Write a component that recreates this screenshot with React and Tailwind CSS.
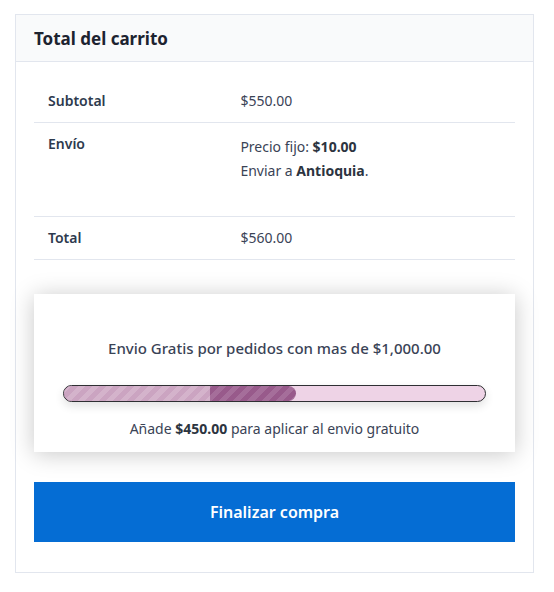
import React from 'react';

const cart = {
  subtotal: 550,
  shipping: 10,
  region: 'Antioquia',
  freeFrom: 1000,
};

const money = (n) =>
  '$' + n.toLocaleString('en-US', { minimumFractionDigits: 2, maximumFractionDigits: 2 });

const FreeShippingBar = ({ subtotal, goal }) => {
  const pct = Math.min(100, (subtotal / goal) * 100);
  const missing = goal - subtotal;

  return (
    <div className="bg-white shadow-[0_2px_22px_rgba(0,0,0,0.22)] px-[29px] pt-[40px] pb-[11px]">
      <p className="text-center text-[15px] font-medium text-[#3a4356] leading-[28px]">
        Envio Gratis por pedidos con mas de {money(goal)}
      </p>
      <div className="mt-[23px] h-[17px] rounded-full border border-[#2f2f33] bg-[#eed3e6] overflow-hidden shadow-[0_4px_10px_rgba(0,0,0,0.12)]">
        <div
          className="h-full rounded-full flex overflow-hidden bg-[repeating-linear-gradient(135deg,#a56e9a_0_5px,#985a8b_5px_10px)]"
          style={{ width: `${pct}%` }}
        >
          <div className="h-full w-[63%] bg-[repeating-linear-gradient(135deg,#d4b3cb_0_5px,#cba4c1_5px_10px)]" />
        </div>
      </div>
      <p className="mt-[15px] text-center text-[14px] text-[#3a4356] leading-[24px]">
        Añade <strong className="font-bold text-[#2c3440]">{money(missing)}</strong> para aplicar al envio gratuito
      </p>
    </div>
  );
};

export default function App() {
  const total = cart.subtotal + cart.shipping;

  return (
    <div className="min-h-screen bg-white pt-[14px] pl-[15px] pr-[20px] font-['Noto_Sans',sans-serif] text-[#2d3748]">
      <div className="border border-[#e2e6ee]">
        <div className="bg-[#f9fafb] border-b border-[#e2e6ee] px-[18px] h-[47px] flex items-center pt-[2px]">
          <h2 className="text-[17px] font-bold text-[#1d2330]">Total del carrito</h2>
        </div>

        <div className="px-[18px] pt-[18px] pb-[30px]">
          <div className="text-[14px] leading-[24px]">
            <div className="grid grid-cols-[2fr_3fr] border-b border-[#e2e6ee] py-[9px]">
              <div className="px-[14px] font-semibold text-[#2d3a4e]">Subtotal</div>
              <div className="px-[14px] text-[#3a4356]">{money(cart.subtotal)}</div>
            </div>
            <div className="grid grid-cols-[2fr_3fr] border-b border-[#e2e6ee] pt-[9px] pb-[33px]">
              <div className="px-[14px] font-semibold text-[#2d3a4e]">Envío</div>
              <div className="px-[14px] pt-[3px] text-[#3a4356]">
                <p>
                  Precio fijo: <strong className="font-bold text-[#2c3440]">{money(cart.shipping)}</strong>
                </p>
                <p>
                  Enviar a <strong className="font-bold text-[#2c3440]">{cart.region}</strong>.
                </p>
              </div>
            </div>
            <div className="grid grid-cols-[2fr_3fr] border-b border-[#e2e6ee] py-[9px]">
              <div className="px-[14px] font-semibold text-[#2d3a4e]">Total</div>
              <div className="px-[14px] text-[#3a4356]">{money(total)}</div>
            </div>
          </div>

          <div className="mt-[34px]">
            <FreeShippingBar subtotal={cart.subtotal} goal={cart.freeFrom} />
          </div>

          <button className="mt-[30px] w-full h-[60px] bg-[#056dd4] text-white text-[16px] font-semibold">
            Finalizar compra
          </button>
        </div>
      </div>
    </div>
  );
}
